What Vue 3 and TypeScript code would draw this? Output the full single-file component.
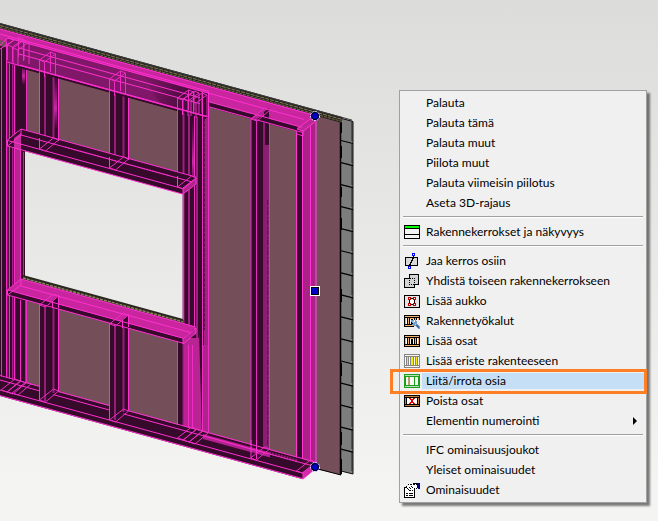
<script setup lang="ts">
type IconName = 'layers' | 'split' | 'merge' | 'opening' | 'tools' | 'parts' | 'insulation' | 'attach' | 'remove' | 'properties'

interface MenuItem {
  label: string
  icon?: IconName
  active?: boolean
  submenu?: boolean
}

const groups: MenuItem[][] = [
  [
    { label: 'Palauta' },
    { label: 'Palauta tämä' },
    { label: 'Palauta muut' },
    { label: 'Piilota muut' },
    { label: 'Palauta viimeisin piilotus' },
    { label: 'Aseta 3D-rajaus' },
  ],
  [{ label: 'Rakennekerrokset ja näkyvyys', icon: 'layers' }],
  [
    { label: 'Jaa kerros osiin', icon: 'split' },
    { label: 'Yhdistä toiseen rakennekerrokseen', icon: 'merge' },
    { label: 'Lisää aukko', icon: 'opening' },
    { label: 'Rakennetyökalut', icon: 'tools' },
    { label: 'Lisää osat', icon: 'parts' },
    { label: 'Lisää eriste rakenteeseen', icon: 'insulation' },
    { label: 'Liitä/irrota osia', icon: 'attach', active: true },
    { label: 'Poista osat', icon: 'remove' },
    { label: 'Elementin numerointi', submenu: true },
  ],
  [
    { label: 'IFC ominaisuusjoukot' },
    { label: 'Yleiset ominaisuudet' },
    { label: 'Ominaisuudet', icon: 'properties' },
  ],
]

// Horizontal members of the wall run down to the right at this slope.
const slope = 0.2745
const along = (x1: number, y1: number, x2: number): string =>
  `M${x1} ${y1}L${x2} ${(y1 + (x2 - x1) * slope).toFixed(1)}`

// A sloping strip of the given height between two x positions.
const strip = (x1: number, y1: number, x2: number, h: number): string => {
  const y2 = y1 + (x2 - x1) * slope
  return `${x1},${y1} ${x2},${y2.toFixed(1)} ${x2},${(y2 + h).toFixed(1)} ${x1},${y1 + h}`
}

// Short stud seen at an angle: front face, edge line, side face.
interface Stud {
  x: number
  top: number
  bottom: number
}
const studs: Stud[] = [
  { x: 39.5, top: 59, bottom: 149 },
  { x: 109.5, top: 78, bottom: 168 },
  { x: 39.5, top: 303, bottom: 401 },
  { x: 109.5, top: 322, bottom: 420 },
]
const studFace = (s: Stud): string =>
  `${s.x},${s.top} ${s.x + 19},${s.top - 9} ${s.x + 19},${s.bottom - 10} ${s.x + 5},${s.bottom} ${s.x},${s.bottom}`

// Oblique outline where a stud meets a horizontal member.
const joint = (x: number, y: number): string =>
  `M${x} ${y}l14 -11l5 2l-13 11z`

// The same outline under the top plates, where the stud ends show through.
const topJoint = (x: number, y: number): string =>
  `M${x} ${y}l11 -8l5 2l-11 8zM${x} ${y}v15M${x + 5} ${y + 2}v15M${x + 11} ${y - 8}v20M${x + 16} ${y - 6}v22`

const joints = [
  topJoint(7.5, 45), topJoint(13, 48), topJoint(39.5, 60), topJoint(109.5, 79), topJoint(177.5, 98), topJoint(183, 99), topJoint(191, 101),
  joint(39.5, 149), joint(109.5, 168), joint(177.5, 187),
  joint(39.5, 305), joint(109.5, 324),
  joint(1, 390), joint(7, 392), joint(12, 393), joint(39.5, 400), joint(109.5, 420), joint(177.5, 438), joint(183, 440), joint(189, 442),
  joint(250.5, 458), joint(296.5, 471), joint(251, 119),
].join('')

const topLines = [
  along(0, 29, 315), along(0, 34, 209), along(8, 38, 209), along(208, 93, 304),
  along(19, 48, 200), along(19, 54, 200), along(208, 101.5, 302), along(208, 106.5, 302),
  along(7, 62, 209), along(20, 65, 207),
].join('')
const headerLines = [along(21, 129, 196), along(21, 135, 196), along(7.5, 140.5, 183), along(7.5, 146, 183)].join('')
const sillLines = [along(21, 279, 196), along(21, 286, 196), along(7.5, 290, 183), along(7.5, 295, 183)].join('')
const baseLines = [along(0, 375.5, 317), along(0, 380, 315), along(0, 390, 303), along(0, 395.5, 303)].join('')

const sidingRows = Array.from({ length: 15 }, (_, i) => 140.5 + i * 22.05)
const sidingGaps: [number, number][] = [[122, 11], [146, 12], [187, 10], [218, 12], [289, 13], [363, 13], [432, 13], [459, 15]]
</script>

<template>
  <main class="viewport">
    <svg class="scene" viewBox="0 0 658 521" preserveAspectRatio="xMinYMin slice" role="img" aria-label="Seinäelementti">
      <defs>
        <linearGradient id="shade" x1="0" x2="1" y1="0" y2="0">
          <stop offset="0" stop-color="#300728" stop-opacity="0" />
          <stop offset="1" stop-color="#300728" />
        </linearGradient>
        <linearGradient id="glint" x1="0" x2="0" y1="0" y2="1">
          <stop offset="0" stop-color="#b32291" stop-opacity="0" />
          <stop offset="0.6" stop-color="#c928a4" />
          <stop offset="1" stop-color="#b32291" stop-opacity="0" />
        </linearGradient>
      </defs>

      <!-- siding -->
      <polygon points="340,118 353,121 353,474 340,471" fill="#7d7d7d" />
      <path d="M340 118L353 121.500V474L341 471" fill="none" stroke="#111" stroke-width="1" />
      <path d="M352 122V473" stroke="#222" stroke-width="1" stroke-dasharray="19 3" />
      <path v-for="y in sidingRows" :key="y" :d="`M341 ${y}L353 ${y + 3}`" stroke="#000" stroke-width="1.200" />

      <!-- sheathing with the window opening -->
      <path d="M0 24L341 117.500V475L0 395Z M24 151V276L183 320V194Z" fill="#744f5a" fill-rule="evenodd" />
      <path d="M340.500 119V475" stroke="#000" stroke-width="1.500" />
      <rect v-for="gap in sidingGaps" :key="gap[0]" x="340" :y="gap[0]" width="2" :height="gap[1]" fill="#000" />
      <path d="M303 465L341 475" stroke="#000" stroke-width="1" />

      <!-- layered top edge -->
      <polygon :points="strip(0, 23, 342, 6)" fill="#25251f" />
      <path :d="along(0, 25.5, 342)" stroke="#857b57" stroke-width="1" stroke-dasharray="4 1" />
      <path :d="along(0, 27.5, 342)" stroke="#756c4c" stroke-width="1" stroke-dasharray="3 1" />
      <path :d="along(0, 23.5, 352)" stroke="#3c3d3a" stroke-width="1" />

      <!-- left stud cluster -->
      <polygon points="0,46 27,52 27,130 25,140 25,400 0,394" fill="#360a2b" />
      <path d="M7.500 50V389M14.500 52V391" stroke="#86196b" stroke-width="2" />
      <rect x="15" y="145" width="6" height="147" fill="#b4258f" />
      <path d="M1.500 48V388M6.500 40V390M9.500 44V390M14.500 48V391M20.500 145V280M20.500 300V386M26.500 60V130M26.500 290V382" stroke="#f02cc4" stroke-width="1" />
      <path d="M12.500 46V390" stroke="#a61f84" stroke-width="1" />
      <rect x="22" y="63" width="3" height="22" fill="url(#glint)" />
      <path d="M23.500 152V276" stroke="#6b6448" stroke-width="1" />

      <!-- right stud cluster beside the opening -->
      <polygon points="178,97 208,97 208,450 178,442 178,338 184,338 184,194 178,186" fill="#360a2b" />
      <rect x="204" y="118" width="5" height="320" fill="#a02382" />
      <path d="M204.500 118V330" stroke="#5b164b" stroke-width="1" stroke-dasharray="4 1" />
      <path d="M183.500 100V440M189 100V440M197 100V440" stroke="#9d1f80" stroke-width="2" />
      <rect x="192" y="120" width="3" height="70" fill="url(#glint)" />
      <rect x="184" y="338" width="15" height="98" fill="#b82592" />
      <polygon points="199,330 202,436 196,436" fill="#b82592" />
      <polygon points="202,345 208,345 208,435 203,435" fill="#ad258b" />
      <path d="M177.500 98V186M177.500 335V438M194.500 96V330M202.500 96V438M208.500 92V432M188.500 345V440M192.500 345V438" stroke="#f02cc4" stroke-width="1" />
      <path d="M183.500 194V320" stroke="#f02cc4" stroke-width="1" />

      <!-- full-height stud -->
      <rect x="251" y="108" width="19" height="348" fill="#360a2b" />
      <rect x="265" y="145" width="4" height="303" fill="#8a2070" />
      <path d="M267.500 200V445" stroke="#5b164b" stroke-width="1" stroke-dasharray="5 2 2 1" />
      <path d="M251 117V458M256.500 119V458M264 111V450M269.500 110V450" stroke="#e52bbb" stroke-width="1" />

      <!-- end stud -->
      <rect x="297" y="128" width="6" height="344" fill="#360a2b" />
      <polygon points="302,130 317,120 317,462 302,473" fill="#aa2288" />
      <path d="M296.500 131V470M302.500 128V472M310.500 122V462" stroke="#ff35d3" stroke-width="1" />
      <path d="M316 121V462" stroke="#b94a9d" stroke-width="2" />

      <!-- base plate -->
      <polygon :points="strip(0, 376, 303, 20)" fill="#360a2b" />
      <polygon points="302,459 315,463 315,469 302,479" fill="#40102f" />
      <polygon :points="strip(203, 434, 270, 5)" fill="#b32290" />
      <path :d="along(269, 453, 297)" stroke="#8d2070" stroke-width="3" stroke-dasharray="2 1" />
      <polygon points="303,472 315,464 315,468 303,479" fill="#d52aac" />
      <path :d="baseLines" class="edge" />
      <path d="M303 472V479L315 469" class="edge" />
      <path d="M251 440V458M256.500 440V459" class="edge" />

      <!-- short studs above and below the opening -->
      <g v-for="s in studs" :key="`${s.x}-${s.top}`">
        <polygon :points="studFace(s)" fill="#360a2b" />
        <path :d="`M${s.x + 5.500} ${s.top}V${s.bottom}M${s.x + 14} ${s.top - 6}V${s.bottom - 8}`" stroke="#951e79" stroke-width="2" />
        <path :d="`M${s.x} ${s.top}V${s.bottom}M${s.x + 19} ${s.top - 8}V${s.bottom - 10}`" class="edge" />
      </g>
      <rect x="54" y="77" width="3" height="52" fill="url(#glint)" />

      <!-- top plates -->
      <polygon points="0,29 315,115 304,128 208,101 208,97 0,40" fill="#c9259f" />
      <polygon :points="strip(208, 102, 302, 5)" fill="#360a2b" />
      <polygon :points="strip(7, 38, 208, 25)" fill="#811768" />
      <polygon points="143,76 208,94 208,118 160,104" fill="url(#shade)" />
      <path :d="along(20, 67, 206)" stroke="#360a2b" stroke-width="2" />
      <polygon points="297,128 310,119 317,121 303,133" fill="#bb2795" />
      <polygon points="251,118 264,109 269,111 257,119" fill="#b82493" />
      <path d="M264 112L269 108V119L264 117Z" fill="#360a2b" />
      <path :d="topLines" class="edge" />
      <path d="M297 129L310 119L316 121L303 131ZM303 131V136L297 134M0 45L8 38L14 40L0 49M208.500 92V118M202.500 92V118" class="edge" />

      <!-- header above the opening -->
      <polygon points="7.500,140.500 21,129 196,177 196,184 183,194 7.500,146" fill="#360a2b" />
      <path :d="along(65, 147, 170)" stroke="#8c1e71" stroke-width="1.500" stroke-dasharray="2 1" />
      <polygon points="14,138 21,133 21,151 14,148" fill="#c62ca0" />
      <path :d="headerLines" class="edge" />
      <path d="M39.500 138V149M109.500 157V168M177.500 176V187M58.500 135V141M128.500 155V160" class="edge" />
      <polygon points="183,188 196,178 196,184 183,194" fill="#ac278a" class="face" />
      <path d="M7.500 146V140L21 129V135L7.500 146" class="edge" />

      <!-- sill below the opening -->
      <polygon :points="strip(23, 275, 183, 5)" fill="#29271e" />
      <path :d="along(23, 278, 183)" stroke="#8f8560" stroke-width="1.500" stroke-dasharray="3 1" />
      <polygon points="7.500,290 21,279 196,327 183,339" fill="#c9259f" />
      <polygon :points="strip(7.5, 290, 183, 5)" fill="#360a2b" />
      <polygon :points="strip(21, 286, 183, 8)" fill="#c9259f" />
      <path d="M58 296V308L46 306ZM128 315V327L116 325Z" fill="#360a2b" />
      <path d="M58.500 295V308M128.500 314V327M122.500 320V328M52.500 301V308" class="edge" />
      <path :d="sillLines" class="edge" />
      <polygon points="183,339 196,328 196,333 183,344" fill="#bd2698" class="face" />
      <path d="M7.500 295V290L21 279V285L7.500 295" class="edge" />

      <path :d="joints" class="joint" />

      <!-- grips -->
      <g stroke="#fff" fill="#0000c8">
        <circle cx="315" cy="116" r="4.500" stroke-dasharray="2 1" />
        <circle cx="315" cy="467" r="4.500" stroke-dasharray="2 1" />
        <circle cx="315" cy="116" r="3.500" stroke="#000" />
        <circle cx="315" cy="467" r="3.500" stroke="#000" />
      </g>
      <rect x="310" y="286" width="10" height="10" fill="#fff" />
      <rect x="311" y="287" width="8" height="8" fill="#000" />
      <rect x="312" y="288" width="6" height="6" fill="#0000c8" />
    </svg>

    <nav class="menu" aria-label="Pikavalikko">
      <ul v-for="(group, g) in groups" :key="g" class="group">
        <li v-for="item in group" :key="item.label">
          <button type="button" class="item" :class="{ active: item.active }">
            <svg class="icon" viewBox="0 0 16 16" aria-hidden="true">
              <g v-if="item.icon === 'layers'">
                <path d="M0 1h16v14H0z" fill="#000" />
                <path d="M1 2h14v2H1z" fill="#0f0" />
                <path d="M1 5h14v5H1zM1 11h14v3H1z" fill="#f4f4f4" />
              </g>
              <g v-else-if="item.icon === 'split'" fill="none">
                <path d="M1.500 4.500h12v8h-12z" fill="#d8d8d8" stroke="#000" />
                <path d="M9.500 3v2h-1v2h-1v2h-1v2h-1v2" stroke="#000" />
                <path d="M8.500 .5h2v2h-2zM4.500 13.500h2v2h-2z" fill="#fff" stroke="#00f" />
              </g>
              <g v-else-if="item.icon === 'merge'" fill="#d4d4d4" stroke="#000">
                <path d="M5.500 1.500h9v10h-4v3h-10v-9h5z" />
                <path d="M5.500 5.500h5v6h-5z" stroke-dasharray="1 1" />
              </g>
              <g v-else-if="item.icon === 'opening'" fill="none">
                <path d="M.5 2.500h15v12H.5z" fill="#e4e4e4" stroke="#000" />
                <path d="M5.500 5.500h5v6h-5z" fill="#fff" stroke="#000" />
                <path d="M4.500 4.500h2v2h-2zM9.500 4.500h2v2h-2zM4.500 10.500h2v2h-2zM9.500 10.500h2v2h-2z" fill="#fff" stroke="#c00000" />
              </g>
              <g v-else-if="item.icon === 'tools' || item.icon === 'parts'">
                <path d="M0 2h16v12H0z" fill="#000" />
                <path d="M1 3h14v1H1zM1 12h14v1H1z" fill="#f5b26b" />
                <path d="M1 5h1v6H1zM4 5h1v6H4zM11 5h1v6h-1zM14 5h1v6h-1z" fill="#f5b26b" />
                <path d="M2 5h1v6H2zM6 6h1v5H6zM9 6h1v5H9zM13 5h1v6h-1z" fill="#fff" />
                <path d="M6 5h4v1H6z" fill="#f5b26b" />
                <g v-if="item.icon === 'tools'">
                  <path d="M8 7h8v9h-2l-1-2h-3z" fill="#f0f0f0" />
                  <path d="M7 7h2l1 1v1h1V7h1l1 2v2l3 3v2h-2l-3-3H9L7 11h2v-1L7 9z" fill="#6f9fcf" />
                  <path d="M11 11l4 4M9 8l1 2" stroke="#b7d8f4" />
                  <path d="M12 12h1v1h1v1h1" fill="none" stroke="#3f6d9f" />
                </g>
              </g>
              <g v-else-if="item.icon === 'insulation'">
                <path d="M0 1h16v14H0z" fill="#858585" />
                <path d="M1 2h14v1H1zM1 13h14v1H1z" fill="#f5f5f5" />
                <path d="M1 4h1v8H1zM5 4h1v8H5zM10 4h1v8h-1zM14 4h1v8h-1z" fill="#fff" />
                <path d="M3 4h1v8H3zM7 4h2v8H7zM12 4h1v8h-1z" fill="#f8ee00" />
              </g>
              <g v-else-if="item.icon === 'attach'">
                <path d="M0 1h16v14H0z" fill="#18a018" />
                <path d="M1 2h14v1H1zM1 13h14v1H1z" fill="#b7dfb7" />
                <path d="M2 4h8v8H2zM11 4h3v8h-3z" fill="#f8f8f8" />
                <path d="M4 4h2v8H4z" fill="#bb9a68" />
              </g>
              <g v-else-if="item.icon === 'remove'">
                <path d="M0 2h16v12H0z" fill="#000" />
                <path d="M1 3h14v1H1zM1 12h14v1H1zM1 5h1v6H1zM14 5h1v6h-1z" fill="#c4823d" />
                <path d="M3 5h10v6H3z" fill="#fff" />
                <path d="M5 5h2v1h2V5h2v1h-1v1H9v2h1v1h1v1H9v-1H7v1H5v-1h1V9h1V7H6V6H5z" fill="#e80000" />
              </g>
              <g v-else-if="item.icon === 'properties'">
                <path d="M.5 5.500h10v10H.5z" fill="#fff" stroke="#000" />
                <path d="M2 11.500h2M5 11.500h4M2 13.500h2M5 13.500h4" stroke="#000" />
                <path d="M2 6l3-4h5l3 1v3l-3 1-1 2-2-1-2 1-1-2z" fill="#fff" stroke="#000" stroke-dasharray="2 1" />
                <path d="M5 5l2 2M7 4l2 2" stroke="#000" />
                <path d="M9 1.500h4" stroke="#000" />
                <path d="M13 1h3v6h-2V5h-1z" fill="#000080" />
              </g>
            </svg>
            <span class="label">{{ item.label }}</span>
            <svg v-if="item.submenu" class="arrow" viewBox="0 0 4 8" aria-hidden="true"><path d="M0 0l4 4-4 4z" /></svg>
          </button>
        </li>
      </ul>
    </nav>
  </main>
</template>

<style>
body {
  margin: 0;
}
</style>

<style scoped>
.viewport {
  position: relative;
  min-height: 100vh;
  overflow: hidden;
  background: linear-gradient(#dcddda, #e5e6e4 35%, #f4f4f3 95%);
  font-family: "Segoe UI", Lato, "Open Sans", sans-serif;
}

.scene {
  display: block;
  width: 100%;
  height: 100vh;
}

.edge,
.joint {
  fill: none;
  stroke: #ff30d0;
  stroke-width: 1;
}

.joint {
  stroke: #ee2cc3;
}

.face {
  stroke: #ff30d0;
  stroke-width: 1;
}

.menu {
  position: absolute;
  top: 90px;
  left: 399px;
  box-sizing: border-box;
  width: 248px;
  padding: 2px;
  border: 1px solid #a0a0a0;
  background: #f0f0f0;
  box-shadow: 3px 3px 2px rgba(0, 0, 0, 0.5);
}

.group {
  margin: 0;
  padding: 0;
  list-style: none;
}

.group + .group::before {
  content: "";
  display: block;
  height: 1px;
  margin: 3px 1px 4px;
  border-top: 1px solid #a0a0a0;
  background: #fff;
}

.item {
  position: relative;
  display: flex;
  align-items: center;
  gap: 2px;
  width: 100%;
  height: 20px;
  padding: 0 0 0 2px;
  border: 0;
  background: none;
  color: #000;
  font: inherit;
  font-size: 12px;
  line-height: 16px;
  text-align: left;
}

.icon {
  flex: none;
  width: 16px;
  height: 16px;
  shape-rendering: crispEdges;
}

.label {
  flex: 1;
  padding-left: 4px;
  white-space: nowrap;
}

.active .label {
  background: #c5dff6;
}

.active::after {
  content: "";
  position: absolute;
  inset: -2px -3px -3px -12px;
  border: 3px solid #ff7f27;
}

.arrow {
  flex: none;
  width: 4px;
  height: 8px;
  margin-right: 7px;
}
</style>
